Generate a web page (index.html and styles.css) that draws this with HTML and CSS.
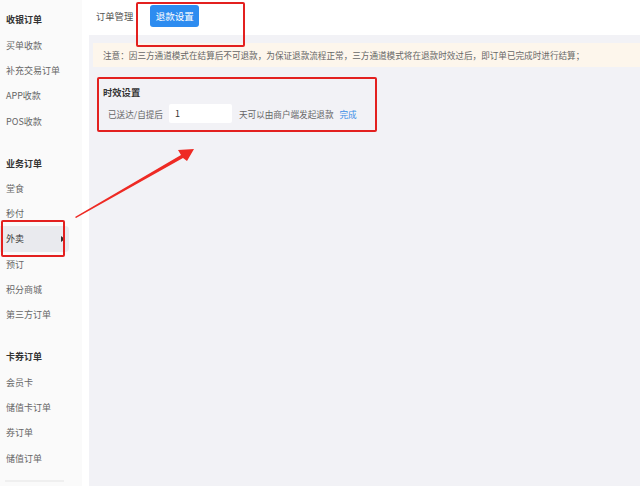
FILE: index.html
```html
<!DOCTYPE html>
<html lang="zh">
<head>
<meta charset="utf-8">
<link rel="stylesheet" href="styles.css">
</head>
<body>
<div class="app">
  <aside class="sidebar">
    <div class="group">
      <div class="title">收银订单</div>
      <div class="item">买单收款</div>
      <div class="item">补充交易订单</div>
      <div class="item">APP收款</div>
      <div class="item">POS收款</div>
    </div>
    <div class="group">
      <div class="title">业务订单</div>
      <div class="item">堂食</div>
      <div class="item">秒付</div>
      <div class="item active">外卖<span class="caret"></span><span class="mark mark-side"></span></div>
      <div class="item">预订</div>
      <div class="item">积分商城</div>
      <div class="item">第三方订单</div>
    </div>
    <div class="group">
      <div class="title">卡券订单</div>
      <div class="item">会员卡</div>
      <div class="item">储值卡订单</div>
      <div class="item">券订单</div>
      <div class="item">储值订单</div>
    </div>
    <div class="divider"></div>
  </aside>
  <main class="main">
    <header class="header">
      <span class="tab">订单管理</span>
      <span class="btn">退款设置</span>
      <span class="mark mark-top"></span>
    </header>
    <section class="content">
      <div class="notice">注意：因三方通道模式在结算后不可退款，为保证退款流程正常，三方通道模式将在退款时效过后，即订单已完成时进行结算；</div>
      <div class="setting">
        <div class="setting-title">时效设置</div>
        <div class="setting-row">
          <span class="label">已送达/自提后</span>
          <span class="input">1</span>
          <span class="desc">天可以由商户端发起退款</span>
          <span class="link">完成</span>
        </div>
      </div>
    </section>
  </main>
</div>
<svg class="arrow" width="640" height="486" viewBox="0 0 640 486">
  <polygon points="75,217 181,155 178,150 194,149 187,161 183,158 76,218" fill="#ee2a24"/>
</svg>
</body>
</html>
```
FILE: styles.css
```css
* { box-sizing: border-box; }
html, body { margin: 0; padding: 0; }
body {
  width: 640px;
  height: 486px;
  overflow: hidden;
  font-family: "Noto Sans CJK SC", "Noto Sans", sans-serif;
  background: #fff;
  position: relative;
}
.app {
  display: flex;
  height: 486px;
}
.sidebar {
  width: 82px;
  flex: none;
  background: #fafafa;
  padding-top: 7.4px;
}
.group { margin-bottom: 16.7px; }
.group:nth-child(3) { margin-bottom: 9px; }
.title, .item {
  height: 25.3px;
  line-height: 25.3px;
  padding-left: 6px;
  font-size: 9px;
  white-space: nowrap;
  position: relative;
}
.title { color: #333; font-weight: bold; }
.item { color: #666; }
.item.active {
  background: #e9eaee;
  width: 69px;
  border-radius: 0 4px 4px 0;
  color: #333;
}
.caret {
  position: absolute;
  left: 61px;
  top: 9.5px;
  width: 0;
  height: 0;
  border-top: 3px solid transparent;
  border-bottom: 3px solid transparent;
  border-left: 4px solid #333;
}
.mark {
  position: absolute;
  border: 2px solid #e3201f;
  border-radius: 2px;
}
.mark-side {
  left: 1px;
  top: -6px;
  width: 64px;
  height: 37px;
}
.divider {
  margin: 0 18px 0 5px;
  height: 2px;
  background: #efefef;
}
.main {
  flex: 1;
  display: flex;
  flex-direction: column;
  background: #fff;
  padding-left: 7px;
}
.header {
  height: 35px;
  display: flex;
  align-items: flex-start;
  padding-left: 7px;
  position: relative;
}
.tab {
  font-size: 9.3px;
  color: #555;
  margin-top: 9px;
  line-height: 14px;
}
.btn {
  margin-left: 17px;
  margin-top: 5px;
  width: 49px;
  height: 22px;
  line-height: 22px;
  background: #2d8cf0;
  color: #fff;
  border-radius: 3px;
  font-size: 9.5px;
  text-align: center;
}
.mark-top {
  left: 47px;
  top: 2px;
  width: 109px;
  height: 45px;
  z-index: 2;
}
.content {
  flex: 1;
  background: #f2f2f6;
  padding: 8px 0 0 4px;
}
.notice {
  height: 24px;
  line-height: 24px;
  background: #fdf6ec;
  color: #666;
  font-size: 8.6px;
  padding-left: 10px;
  white-space: nowrap;
}
.setting {
  margin: 10px 0 0 4px;
  width: 280px;
  height: 55px;
  border: 2px solid #e3201f;
  border-radius: 2px;
  padding: 6px 0 0 4px;
}
.setting-title {
  font-size: 9.3px;
  font-weight: bold;
  color: #333;
  line-height: 14px;
}
.setting-row {
  display: flex;
  align-items: center;
  margin-top: 5px;
  padding-left: 5px;
  font-size: 8.6px;
  color: #666;
}
.input {
  width: 63px;
  height: 19px;
  line-height: 19px;
  background: #fff;
  margin-left: 6px;
  padding-left: 6px;
  color: #333;
  font-size: 9px;
  border-radius: 2px;
}
.desc { margin-left: 7px; }
.link { margin-left: 6px; color: #3a8ee6; }
.arrow {
  position: absolute;
  left: 0;
  top: 0;
  pointer-events: none;
}
```
